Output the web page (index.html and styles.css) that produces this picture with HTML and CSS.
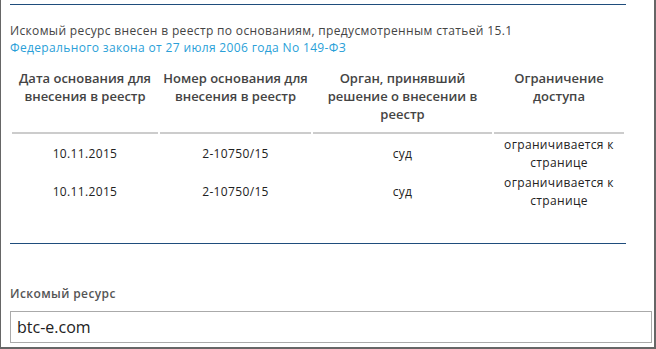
FILE: index.html
```html
<!DOCTYPE html>
<html lang="ru">
<head>
  <meta charset="UTF-8">
  <title>Реестр</title>
  <link rel="stylesheet" href="styles.css">
</head>
<body>
  <div class="frame">
    <hr class="rule rule--top">
    <p class="note">
      Искомый ресурс внесен в реестр по основаниям, предусмотренным статьей 15.1<br>
      <a class="note__link" href="#">Федерального закона от 27 июля 2006 года No 149-ФЗ</a>
    </p>
    <table class="basis">
      <thead>
        <tr>
          <th class="basis__col basis__col--date">Дата основания для внесения в реестр</th>
          <th class="basis__col basis__col--num">Номер основания для внесения в реестр</th>
          <th class="basis__col basis__col--org">Орган, принявший решение о внесении в реестр</th>
          <th class="basis__col basis__col--access">Ограничение доступа</th>
        </tr>
      </thead>
      <tbody>
        <tr>
          <td>10.11.2015</td>
          <td>2-10750/15</td>
          <td>суд</td>
          <td>ограничивается к странице</td>
        </tr>
        <tr>
          <td>10.11.2015</td>
          <td>2-10750/15</td>
          <td>суд</td>
          <td>ограничивается к странице</td>
        </tr>
      </tbody>
    </table>
    <hr class="rule rule--bottom">
    <label class="field__label" for="resource">Искомый ресурс</label>
    <input class="field__input" id="resource" type="text" value="btc-e.com">
  </div>
</body>
</html>
```
FILE: styles.css
```css
* {
  box-sizing: border-box;
}
body {
  margin: 0;
  font-family: 'Open Sans', sans-serif;
  color: #333;
  background: #fff;
}
.frame {
  width: 656px;
  height: 349px;
  padding: 4px 0 0 9px;
  border-left: 1px solid #666;
  border-right: 2px solid #666;
  border-bottom: 2px solid #666;
  overflow: hidden;
}
.rule {
  width: 616px;
  margin: 0;
  border: 0;
  border-top: 1px solid #1f4d7c;
  height: 0;
}
.note {
  margin: 17px 0 0;
  font-size: 12px;
  line-height: 17px;
  letter-spacing: 0.35px;
  color: #444;
}
.note__link {
  color: #2a9fd8;
  text-decoration: none;
}
.basis {
  width: 616px;
  margin-top: 3px;
  border-spacing: 2px;
  font-size: 12px;
  line-height: 18px;
  color: #222;
}
.basis th {
  padding: 8px 0 9px;
  vertical-align: top;
  font-size: 13px;
  font-weight: 600;
  color: #444;
  border-bottom: 2px solid #ccc;
}
.basis td {
  padding: 0;
  text-align: center;
  vertical-align: middle;
  letter-spacing: 0.35px;
}
.basis__col--date { width: 146px; }
.basis__col--num { width: 151px; }
.basis__col--org { width: 179px; }
.basis__col--access { width: 130px; }
.rule--bottom {
  margin-top: 31px;
}
.field__label {
  display: block;
  margin-top: 41px;
  font-size: 12px;
  line-height: 17px;
  font-weight: 600;
  letter-spacing: 0.4px;
  color: #555;
}
.field__input {
  display: block;
  width: 642px;
  height: 32px;
  margin-top: 9px;
  padding: 0 6px;
  border: 1px solid #aaa;
  font-family: 'Open Sans', sans-serif;
  font-size: 16px;
  color: #222;
  outline: none;
}
```
